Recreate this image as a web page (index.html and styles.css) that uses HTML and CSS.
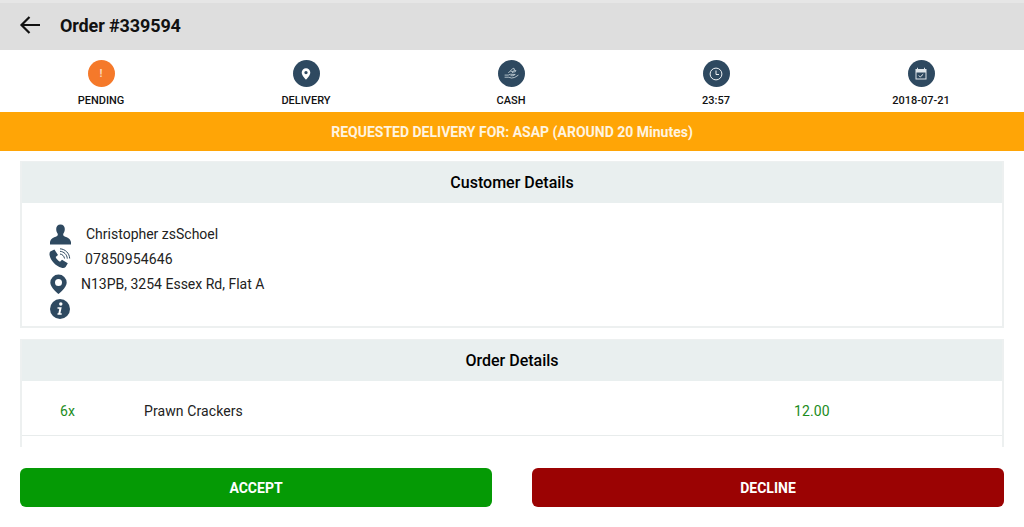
FILE: index.html
```html
<!DOCTYPE html>
<html lang="en">
<head>
<meta charset="utf-8">
<title>Order #339594</title>
<link rel="stylesheet" href="styles.css">
</head>
<body>
<div class="app">
  <header class="topbar">
    <svg class="back" viewBox="0 0 24 24" width="24" height="24"><path d="M22 12H4.500M11.500 4 3.500 12l8 8" fill="none" stroke="#111" stroke-width="2.200"/></svg>
    <h1 class="title">Order #339594</h1>
  </header>

  <nav class="status">
    <div class="stat">
      <span class="disc disc-orange"><span class="bang">!</span></span>
      <span class="stat-label">PENDING</span>
    </div>
    <div class="stat">
      <span class="disc"><svg viewBox="0 0 16 16" width="14" height="14"><path fill-rule="evenodd" fill="#fff" d="M8 1.500a4.900 4.900 0 0 0-4.900 4.900C3.100 10 8 14.500 8 14.500s4.900-4.500 4.900-8.100A4.900 4.900 0 0 0 8 1.500Zm0 3a1.900 1.900 0 1 1 0 3.800 1.900 1.900 0 0 1 0-3.800Z"/></svg></span>
      <span class="stat-label">DELIVERY</span>
    </div>
    <div class="stat">
      <span class="disc"><svg viewBox="0 0 16 16" width="17" height="17" fill="none" stroke="#c9d4da" stroke-width=".8"><path d="M1.500 9.500h3.500l2-.8 4.500.2-2.200 1.200H7M1.500 11.500h4l2.500.8 3-.6 3.500-2.200"/><path d="M5 7.500 9.500 3l1.500.8-1 1.200 2.200.2-.7 1.200-2 .2-1 1M7 5.800l3 .4"/></svg></span>
      <span class="stat-label">CASH</span>
    </div>
    <div class="stat">
      <span class="disc"><svg viewBox="0 0 16 16" width="16" height="16" fill="none" stroke="#eef2f4" stroke-width="1"><circle cx="8" cy="8" r="5.900"/><path d="M8 4.500V8.500H11"/></svg></span>
      <span class="stat-label">23:57</span>
    </div>
    <div class="stat">
      <span class="disc"><svg viewBox="0 0 16 16" width="16" height="16"><path fill="#dfe6ea" d="M2.500 3H4V1.800h1V3h6V1.800h1V3h1.500v10.500h-11Zm1 3.500v6h9v-6Z"/><path fill="none" stroke="#eef2f4" stroke-width="1" d="M5.800 9.500l1.500 1.500 2.900-2.800"/></svg></span>
      <span class="stat-label">2018-07-21</span>
    </div>
  </nav>

  <div class="banner">REQUESTED DELIVERY FOR: ASAP (AROUND 20 Minutes)</div>

  <main class="scroll">
    <section class="card card-customer">
      <h2 class="card-head">Customer Details</h2>
      <div class="contact">
        <div class="contact-row">
          <svg class="cicon" viewBox="0 0 22 22" width="22" height="22"><path fill="#2e4960" d="M11.500 1.500c-2.700 0-4.300 2-4.300 4.500 0 2 .7 3.600 1.500 4.700.3 1.300 0 2-1 2.500C5.500 14.300 1.800 15 1 19v2.500h21V19c-.8-4-4.500-4.700-6.700-5.800-1-.5-1.300-1.200-1-2.500.8-1.100 1.500-2.700 1.500-4.700 0-2.500-1.600-4.500-4.300-4.500Z"/></svg>
          <span class="ctext t-name">Christopher zsSchoel</span>
        </div>
        <div class="contact-row">
          <svg class="cicon" viewBox="0 0 22 22" width="22" height="22"><path fill="#2e4960" d="M1.300 3.600 5.400 1.500 9 7 6.700 9c.7 2 2 3.400 4.300 4.700l2-2 5.800 3.500-2.200 3.800c-1 1-2.500 1.300-4 .8C6.500 18 1.600 12.500.6 7.300c-.3-1.500 0-2.900.7-3.700Z"/><path fill="none" stroke="#2e4960" stroke-width="1" d="M11 6c2.400.3 4.200 2.100 4.500 4.500M11 3.300c4 .3 7 3.300 7.300 7.300M11 .8c5.300.3 9.400 4.400 9.700 9.700"/></svg>
          <span class="ctext t-phone">07850954646</span>
        </div>
        <div class="contact-row">
          <svg class="cicon" viewBox="0 0 22 22" width="22" height="22"><path fill-rule="evenodd" fill="#2e4960" d="M9.500 1.500A8.200 8.200 0 0 0 1.300 9.700C1.300 14.500 9.500 21 9.500 21s8.200-6.500 8.200-11.300A8.200 8.200 0 0 0 9.500 1.500Zm0 4.500a3.500 3.500 0 1 1 0 7 3.500 3.500 0 0 1 0-7Z"/></svg>
          <span class="ctext t-addr">N13PB, 3254 Essex Rd, Flat A</span>
        </div>
        <div class="contact-row">
          <svg class="cicon" viewBox="0 0 22 22" width="22" height="22"><circle cx="11" cy="11" r="10" fill="#2e4960"/><circle cx="11.800" cy="6" r="1.700" fill="#fff"/><path fill="#fff" d="M8.500 9.300h4.200l-1.300 6h1.300v1.400H8.500v-1.400h.9l.9-4.600h-1.800Z"/></svg>
        </div>
      </div>
    </section>

    <section class="card card-order">
      <h2 class="card-head">Order Details</h2>
      <div class="line">
        <span class="qty">6x</span>
        <span class="item">Prawn Crackers</span>
        <span class="price">12.00</span>
      </div>
      <div class="line line-empty"></div>
    </section>
  </main>

  <footer class="actions">
    <button class="btn btn-accept">ACCEPT</button>
    <button class="btn btn-decline">DECLINE</button>
  </footer>
</div>
</body>
</html>
```

FILE: styles.css
```css
* { box-sizing: border-box; }
html, body { margin: 0; padding: 0; background: #fff; }
body { font-family: Roboto, "Liberation Sans", sans-serif; color: #111; }

.app { width: 1024px; height: 527px; display: flex; flex-direction: column; overflow: hidden; }

.topbar {
  height: 50px;
  flex: none;
  display: flex;
  align-items: center;
  gap: 18px;
  padding-left: 18px;
  background: linear-gradient(#e6e6e6 3px, #dedede 3px);
}
.back { flex: none; }
.title { margin: 0; font-size: 18px; font-weight: 700; color: #111; letter-spacing: -.12px; }

.status {
  height: 62px;
  flex: none;
  display: grid;
  grid-template-columns: repeat(5, 205px);
  margin-left: -1.500px;
  padding-top: 10px;
}
.stat { display: flex; flex-direction: column; align-items: center; }
.disc {
  width: 27px;
  height: 27px;
  border-radius: 50%;
  background: #2e4960;
  display: flex;
  align-items: center;
  justify-content: center;
}
.disc-orange { background: #f5792a; }
.bang { color: #fbd7bd; font-size: 11px; font-weight: 700; line-height: 1; }
.stat-label { margin-top: 7px; font-size: 11px; font-weight: 500; line-height: 13px; color: #111; }

.banner {
  height: 39px;
  flex: none;
  display: flex;
  align-items: center;
  justify-content: center;
  background: #ffa506;
  color: #fff4e0;
  font-size: 14px;
  font-weight: 700;
}

.scroll { flex: none; height: 296px; overflow: hidden; padding: 10px 20px 0; }

.card { border: 2px solid #edf0f0; border-top-width: 1px; background: #fff; }
.card-customer { height: 167px; margin-bottom: 11px; }
.card-head {
  margin: 0;
  height: 41px;
  display: flex;
  align-items: center;
  justify-content: center;
  background: #e9efef;
  font-size: 16px;
  font-weight: 500;
  color: #000;
}

.contact { padding: 18px 0 0 27px; }
.contact-row { height: 25px; display: flex; align-items: center; }
.cicon { flex: none; }
.ctext { font-size: 14px; color: #222; }
.t-name { margin-left: 15px; }
.t-phone { margin-left: 14px; letter-spacing: .1px; }
.t-addr { margin-left: 10px; }

.line {
  height: 55px;
  display: flex;
  align-items: center;
  padding-top: 6px;
  border-bottom: 1px solid #e8ecec;
  font-size: 14px;
  letter-spacing: .1px;
}
.line-empty { height: 30px; border: 0; }
.qty { width: 122px; padding-left: 38px; color: #1c8c1c; }
.item { width: 650px; color: #222; }
.price { color: #1c8c1c; }

.actions { flex: 1; display: flex; gap: 40px; padding: 21px 20px 20px; }
.btn {
  flex: 1;
  height: 39px;
  border: 0;
  border-radius: 6px;
  color: #fff;
  font-family: inherit;
  font-size: 14px;
  font-weight: 700;
}
.btn-accept { background: #059a05; }
.btn-decline { background: #9b0303; }
```
